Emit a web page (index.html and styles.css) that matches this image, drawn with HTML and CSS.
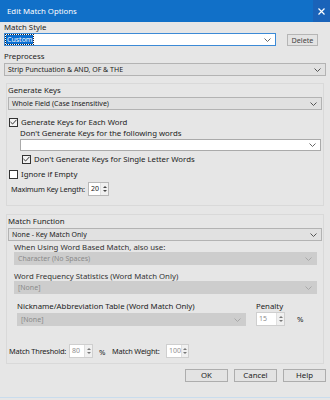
FILE: index.html
```html
<!DOCTYPE html>
<html lang="en">
<head>
    <meta charset="UTF-8">
    <title>Edit Match Options</title>
    <link rel="stylesheet" href="styles.css">
</head>
<body>
    <div class="dialog">
        <div class="titlebar">
            <span class="title">Edit Match Options</span>
            <span class="close">
                <svg width="7" height="7" viewBox="0 0 7 7"><path d="M0.5 0.5L6.5 6.5M6.5 0.5L0.5 6.5" stroke="#fff" stroke-width="1.2"/></svg>
            </span>
        </div>

        <div class="content">
            <div class="label">Match Style</div>
            <div class="row style-row">
                <div class="combo combo-focus">
                    <span class="selected-text">Custom</span>
                    <svg class="chev" width="7" height="4" viewBox="0 0 7 4"><path d="M0.5 0.5L3.5 3.5L6.5 0.5" fill="none" stroke="#666"/></svg>
                </div>
                <button class="btn btn-delete">Delete</button>
            </div>

            <div class="label label-gap">Preprocess</div>
            <div class="select">
                <span>Strip Punctuation &amp; AND, OF &amp; THE</span>
                <svg class="chev" width="7" height="4" viewBox="0 0 7 4"><path d="M0.5 0.5L3.5 3.5L6.5 0.5" fill="none" stroke="#555"/></svg>
            </div>

            <!-- Generate Keys -->
            <div class="group group-keys">
                <div class="label">Generate Keys</div>
                <div class="select">
                    <span>Whole Field (Case Insensitive)</span>
                    <svg class="chev" width="7" height="4" viewBox="0 0 7 4"><path d="M0.5 0.5L3.5 3.5L6.5 0.5" fill="none" stroke="#555"/></svg>
                </div>

                <div class="check-row check-first">
                    <span class="checkbox checked">
                        <svg width="7" height="6" viewBox="0 0 7 6"><path d="M0.5 3L2.6 5L6.5 0.8" fill="none" stroke="#333" stroke-width="1"/></svg>
                    </span>
                    <span>Generate Keys for Each Word</span>
                </div>
                <div class="indent">
                    <div class="label">Don't Generate Keys for the following words</div>
                    <div class="combo combo-white">
                        <span></span>
                        <svg class="chev" width="7" height="4" viewBox="0 0 7 4"><path d="M0.5 0.5L3.5 3.5L6.5 0.5" fill="none" stroke="#666"/></svg>
                    </div>
                    <div class="check-row check-sub">
                        <span class="checkbox checked">
                            <svg width="7" height="6" viewBox="0 0 7 6"><path d="M0.5 3L2.6 5L6.5 0.8" fill="none" stroke="#333" stroke-width="1"/></svg>
                        </span>
                        <span>Don't Generate Keys for Single Letter Words</span>
                    </div>
                </div>

                <div class="check-row check-empty">
                    <span class="checkbox"></span>
                    <span>Ignore if Empty</span>
                </div>

                <div class="row keylen-row">
                    <span class="keylen-label">Maximum Key Length:</span>
                    <div class="spin spin-keylen">
                        <span class="spin-value">20</span>
                        <span class="spin-btns"><i class="up"></i><i class="down"></i></span>
                    </div>
                </div>
            </div>

            <!-- Match Function -->
            <div class="group group-match">
                <div class="label">Match Function</div>
                <div class="select">
                    <span>None - Key Match Only</span>
                    <svg class="chev" width="7" height="4" viewBox="0 0 7 4"><path d="M0.5 0.5L3.5 3.5L6.5 0.5" fill="none" stroke="#555"/></svg>
                </div>

                <div class="sub">
                    <div class="label sub-label">When Using Word Based Match, also use:</div>
                    <div class="select disabled">
                        <span>Character (No Spaces)</span>
                        <svg class="chev" width="7" height="4" viewBox="0 0 7 4"><path d="M0.5 0.5L3.5 3.5L6.5 0.5" fill="none" stroke="#a8a8a8"/></svg>
                    </div>

                    <div class="label sub-label">Word Frequency Statistics (Word Match Only)</div>
                    <div class="select disabled">
                        <span>[None]</span>
                        <svg class="chev" width="7" height="4" viewBox="0 0 7 4"><path d="M0.5 0.5L3.5 3.5L6.5 0.5" fill="none" stroke="#a8a8a8"/></svg>
                    </div>

                    <div class="row nick-row">
                        <div class="nick-col">
                            <div class="label nick-label">Nickname/Abbreviation Table (Word Match Only)</div>
                            <div class="select disabled">
                                <span>[None]</span>
                                <svg class="chev" width="7" height="4" viewBox="0 0 7 4"><path d="M0.5 0.5L3.5 3.5L6.5 0.5" fill="none" stroke="#a8a8a8"/></svg>
                            </div>
                        </div>
                        <div class="penalty-col">
                            <div class="label">Penalty</div>
                            <div class="row">
                                <div class="spin spin-penalty disabled">
                                    <span class="spin-value">15</span>
                                    <span class="spin-btns"><i class="up"></i><i class="down"></i></span>
                                </div>
                                <span class="pct">%</span>
                            </div>
                        </div>
                    </div>
                </div>

                <div class="row threshold-row">
                    <span class="thr-label">Match Threshold:</span>
                    <div class="spin spin-thr disabled">
                        <span class="spin-value">80</span>
                        <span class="spin-btns"><i class="up"></i><i class="down"></i></span>
                    </div>
                    <span class="pct pct-thr">%</span>
                    <span class="weight-label">Match Weight:</span>
                    <div class="spin spin-weight disabled">
                        <span class="spin-value">100</span>
                        <span class="spin-btns"><i class="up"></i><i class="down"></i></span>
                    </div>
                </div>
            </div>

            <div class="buttons">
                <button class="btn">OK</button>
                <button class="btn">Cancel</button>
                <button class="btn">Help</button>
            </div>
        </div>
    </div>
</body>
</html>
```

FILE: styles.css
```css
* {
    margin: 0;
    padding: 0;
    box-sizing: border-box;
}

body {
    width: 330px;
    height: 400px;
    overflow: hidden;
    background-color: #e6e6e6;
    font-family: 'Noto Sans', 'Open Sans', sans-serif;
    font-size: 7.8px;
    color: #222;
}

.dialog {
    height: 398px;
    border-bottom: 1px solid #c9dced;
}

/* title bar */
.titlebar {
    height: 22px;
    background-color: #1170c8;
    display: flex;
    align-items: center;
    justify-content: space-between;
    color: #fff;
}

.title {
    padding-left: 7px;
    font-size: 7.8px;
}

.close {
    width: 17px;
    height: 22px;
    display: flex;
    align-items: center;
    justify-content: center;
    background-color: #1a63b9;
}

.content {
    padding: 0 4px;
}

.label {
    height: 10px;
    line-height: 10px;
    white-space: nowrap;
}

.label-gap {
    margin-top: 5px;
}

.row {
    display: flex;
    align-items: center;
}

/* combos and selects */
.combo, .select {
    height: 13px;
    display: flex;
    align-items: center;
    justify-content: space-between;
    padding: 0 4px 0 3px;
    font-size: 7px;
    white-space: nowrap;
}

.chev {
    flex-shrink: 0;
}

.combo {
    background-color: #fff;
    border: 1px solid #aaa;
}

.combo-focus {
    width: 272px;
    border-color: #3c8ad6;
    padding-left: 1px;
}

.selected-text {
    background-color: #0a6ed1;
    color: #fff;
    padding: 0 1px;
    line-height: 9px;
    outline: 1px dotted #222;
}

.style-row {
    margin-top: 1px;
}

.select {
    margin-top: 2px;
    background-color: #e1e1e1;
    border: 1px solid #b3b3b3;
}

.select.disabled {
    background-color: #cdcdcd;
    border-color: #cdcdcd;
    color: #8a8a8a;
}

/* buttons */
.btn {
    font-family: inherit;
    font-size: 7.8px;
    color: #222;
    background-color: #e3e3e3;
    border: 1px solid #adadad;
    height: 13px;
    width: 43px;
    line-height: 11px;
}

.btn-delete {
    width: 31px;
    height: 12px;
    margin-left: 11px;
    font-size: 7.2px;
    color: #444;
    border-color: #b5b5b5;
}

/* groups */
.group {
    margin: 7px 2px 0 2px;
    border: 1px solid #d9d9d9;
    padding: 0 1px;
}

.group-keys {
    height: 123px;
}

.group .label:first-child {
    margin-top: 1px;
}

.group-match {
    margin-top: 8px;
    height: 150px;
}

/* checkboxes */
.check-row {
    display: flex;
    align-items: center;
    height: 10px;
    white-space: nowrap;
}

.checkbox {
    width: 9px;
    height: 9px;
    border: 1px solid #333;
    background-color: #fff;
    margin-right: 3px;
    display: flex;
    align-items: center;
    justify-content: center;
}

.checkbox.checked {
    background-color: #f2f2f2;
}

.check-first {
    margin-top: 7px;
    padding-left: 1px;
}

.indent {
    padding-left: 12px;
    padding-right: 1px;
}

.indent .combo-white {
    margin-top: 1px;
    height: 12px;
}

.check-sub {
    margin-top: 3px;
    padding-left: 2px;
}

.check-empty {
    margin-top: 5px;
    padding-left: 1px;
}

.keylen-row {
    margin-top: 3px;
    padding-left: 3px;
}

.keylen-label, .thr-label, .weight-label {
    font-size: 7.4px;
    letter-spacing: -0.2px;
    white-space: nowrap;
}

.keylen-label {
    width: 77px;
}

/* spinners */
.spin {
    height: 14px;
    display: flex;
    background-color: #fff;
    border: 1px solid #b8b8b8;
}

.spin-value {
    flex: 1;
    padding: 1px 0 0 2px;
    font-size: 7px;
    line-height: 9px;
}

.spin-btns {
    width: 8px;
    display: flex;
    flex-direction: column;
    justify-content: center;
    gap: 2px;
    align-items: center;
    border-left: 1px solid #e0e0e0;
    background-color: #f0f0f0;
}

.spin-btns i {
    width: 0;
    height: 0;
    border-left: 2px solid transparent;
    border-right: 2px solid transparent;
}

.spin-btns .up {
    border-bottom: 2px solid #444;
}

.spin-btns .down {
    border-top: 2px solid #444;
}

.spin.disabled {
    border-color: #cfcfcf;
    color: #8f8f8f;
}

.spin.disabled .spin-btns i {
    border-bottom-color: #777;
    border-top-color: #777;
}

.spin-keylen {
    width: 21px;
}

/* match function internals */
.sub {
    padding: 0 5px 0 6px;
}

.sub-label {
    margin-top: 6px;
    color: #333;
}

.sub .select {
    margin-top: 0;
}

.nick-row {
    align-items: flex-start;
    margin-top: 6px;
}

.nick-col {
    width: 232px;
    padding-left: 3px;
}

.nick-col .select {
    margin-top: 2px;
}

.penalty-col {
    margin-left: 10px;
}

.spin-penalty {
    width: 29px;
    margin-top: 1px;
}

.pct {
    margin-left: 12px;
    margin-top: 1px;
}

.threshold-row {
    margin-top: 18px;
    padding-left: 1px;
}

.thr-label {
    width: 60px;
}

.spin-thr {
    width: 24px;
}

.pct-thr {
    margin-left: 6px;
    width: 7px;
}

.weight-label {
    margin-left: 6px;
    width: 54px;
}

.spin-weight {
    width: 23px;
}

/* dialog buttons */
.buttons {
    display: flex;
    justify-content: flex-end;
    gap: 6px;
    margin-top: 5px;
}
```
